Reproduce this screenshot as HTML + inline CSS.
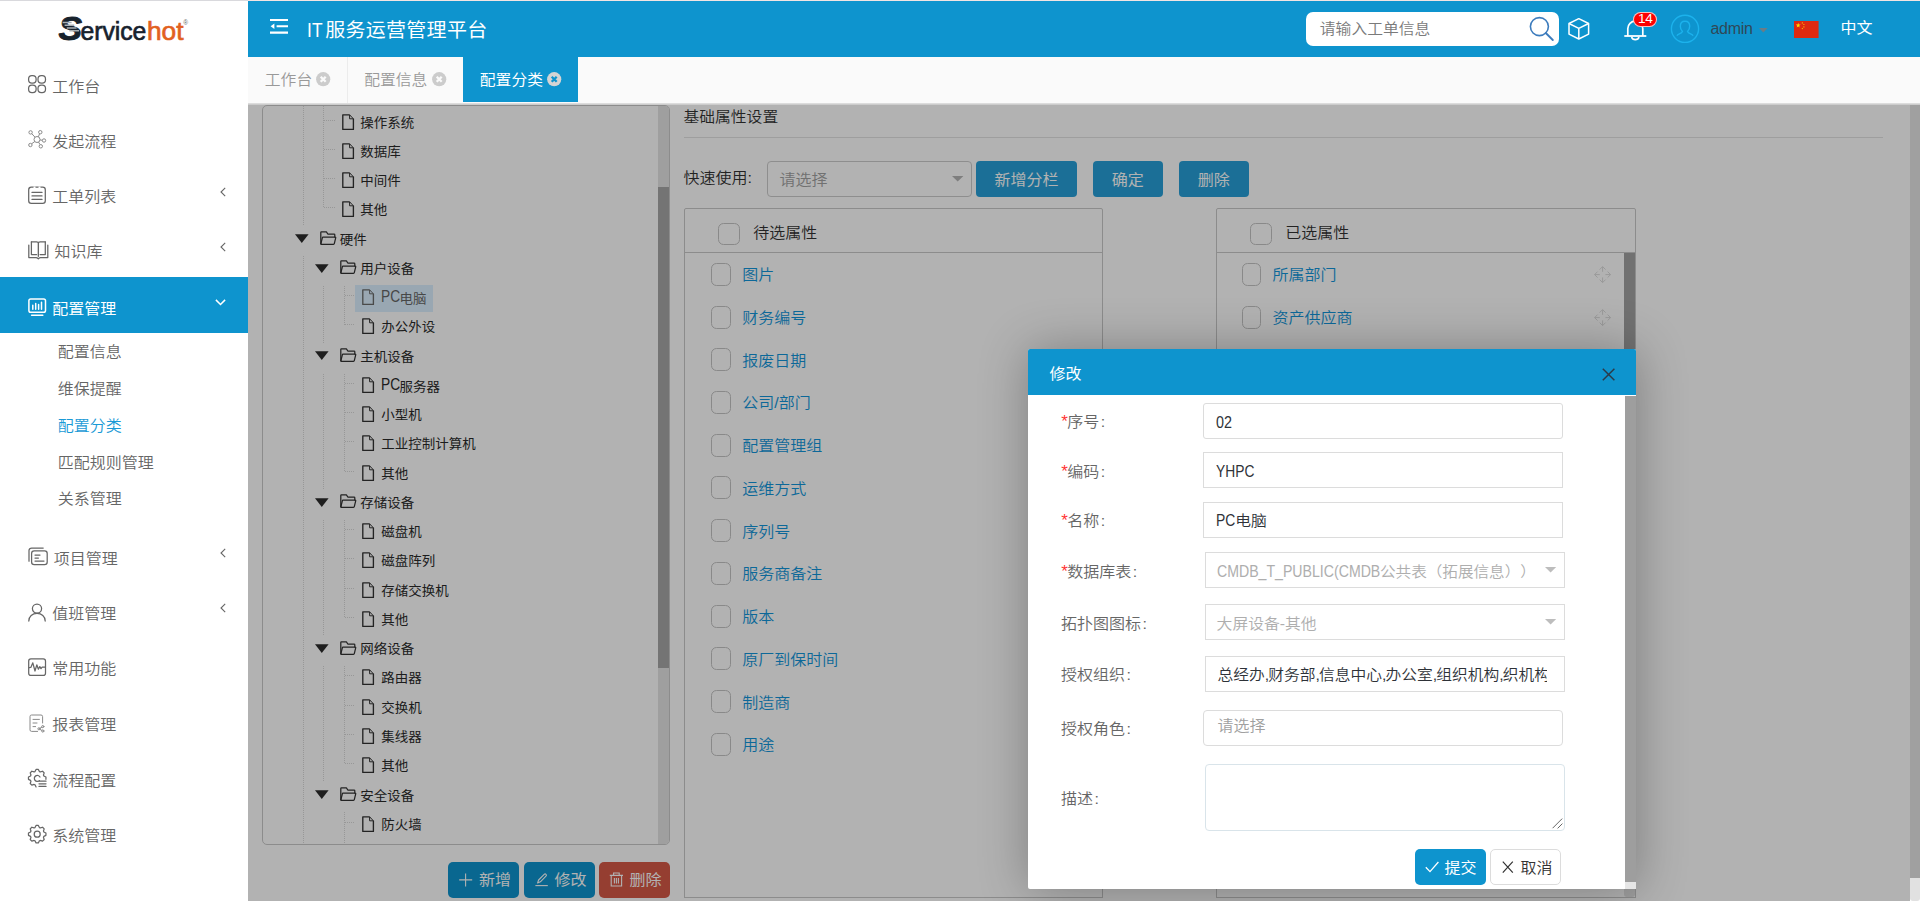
<!DOCTYPE html>
<html lang="zh-CN"><head><meta charset="utf-8"><title>IT服务运营管理平台</title>
<style>
*{box-sizing:border-box;margin:0;padding:0}
html,body{width:1920px;height:902px;overflow:hidden;background:#fff}
body{position:relative;font-family:"Liberation Sans","Noto Sans CJK SC",sans-serif;font-size:16px;color:#333;font-weight:350;text-spacing-trim:space-all;font-kerning:none}
.abs{position:absolute}
.t{position:absolute;white-space:nowrap;line-height:1}
svg{position:absolute;overflow:visible}
#topline{position:absolute;left:0;top:0;width:1920px;height:1px;background:linear-gradient(to right,#d9d9dd 0,#d9d9dd 248px,#f1e4e3 248px,#f1e4e3 100%);z-index:50}
#side{position:absolute;left:0;top:0;width:248px;height:902px;background:#fff}
#mask{position:absolute;left:248px;top:105px;width:1662px;height:796px;background:rgba(0,0,0,.3);z-index:10}
#pscroll{position:absolute;left:1910px;top:105px;width:10px;height:796px;background:#e1e1e1;border-radius:0 0 3px 3px}
#pscroll i{position:absolute;left:0;top:0;width:10px;height:772.6px;background:#a0a0a0}
</style></head><body>
<div id="topline"></div>
<div id="side">
<svg style="left:56px;top:10px" width="140" height="36" viewBox="56 10 140 36"><text font-family="Liberation Sans, sans-serif"><tspan x="58.6" y="39.7" font-weight="700" font-style="italic" font-size="33" fill="#17222d" stroke="#17222d" stroke-width="0.9" stroke-linejoin="round" textLength="23.5" lengthAdjust="spacingAndGlyphs">S</tspan><tspan x="80.4" y="39.5" font-size="26.6" fill="#17222d" stroke="#17222d" stroke-width="0.7" textLength="66" lengthAdjust="spacingAndGlyphs">ervice</tspan><tspan x="147" y="39.5" font-size="26.6" fill="#e2611f" stroke="#e2611f" stroke-width="0.7" textLength="36.5" lengthAdjust="spacingAndGlyphs">hot</tspan><tspan x="183.2" y="25" font-size="6.5" fill="#666">®</tspan></text><path d="M62.6 22.6h9M64.6 25.3h9.6M66.8 28h9.8M69.4 30.7h9.6" stroke="#a9aeb3" stroke-width="1.5"/></svg>
<svg style="left:28.00px;top:75.30px;" width="19" height="19" viewBox="0 0 19 19" fill="none"><rect x="0.6" y="0.6" width="7.5" height="7.5" rx="3.3" stroke="#666" stroke-width="1.25" fill="none" stroke-linecap="round" stroke-linejoin="round"/><rect x="0.6" y="10" width="7.5" height="7.5" rx="3.3" stroke="#666" stroke-width="1.25" fill="none" stroke-linecap="round" stroke-linejoin="round"/><rect x="10" y="0.6" width="7.5" height="7.5" rx="3.3" stroke="#666" stroke-width="1.25" fill="none" stroke-linecap="round" stroke-linejoin="round"/><rect x="10" y="10" width="7.5" height="7.5" rx="3.3" stroke="#666" stroke-width="1.25" fill="none" stroke-linecap="round" stroke-linejoin="round"/></svg>
<div class="t" style="left:52.30px;top:78.50px;font-size:16px;line-height:16px;transform:scaleY(0.94);transform-origin:0 43.75%;color:#666;">工作台</div>
<svg style="left:28.00px;top:130.40px;" width="19" height="19" viewBox="0 0 19 19" fill="none"><circle cx="9" cy="9.5" r="3" stroke="#8a8a8a" stroke-width="1" fill="none"/><circle cx="2.6" cy="2.4" r="1.7" stroke="#8a8a8a" stroke-width="1" fill="none"/><circle cx="12.3" cy="2.2" r="1.7" stroke="#8a8a8a" stroke-width="1" fill="none"/><circle cx="16" cy="10.5" r="1.7" stroke="#8a8a8a" stroke-width="1" fill="none"/><circle cx="12.8" cy="16.3" r="1.7" stroke="#8a8a8a" stroke-width="1" fill="none"/><circle cx="2.4" cy="15" r="1.7" stroke="#8a8a8a" stroke-width="1" fill="none"/><path d="M3.8 3.7L7 7.2M11.6 3.8L10.3 6.8M14.3 10.3L12 9.9M12.1 14.7L10.5 12.1M3.6 13.8L6.8 11.5" stroke="#8a8a8a" stroke-width="1" fill="none"/></svg>
<div class="t" style="left:52.30px;top:133.60px;font-size:16px;line-height:16px;transform:scaleY(0.94);transform-origin:0 43.75%;color:#666;">发起流程</div>
<svg style="left:28.00px;top:186.20px;" width="19" height="19" viewBox="0 0 19 19" fill="none"><rect x="0.7" y="1.2" width="16.6" height="16.2" rx="2.6" stroke="#666" stroke-width="1.25" fill="none" stroke-linecap="round" stroke-linejoin="round"/><path d="M4 6.4h10M4 9.9h10M4 13.4h10" stroke="#666" stroke-width="1.25" fill="none" stroke-linecap="round" stroke-linejoin="round"/><path d="M5.5 1.2h2M10.5 1.2h2" stroke="#fff" stroke-width="1.6"/></svg>
<div class="t" style="left:52.30px;top:189.40px;font-size:16px;line-height:16px;transform:scaleY(0.94);transform-origin:0 43.75%;color:#666;">工单列表</div>
<svg style="left:219.50px;top:186.80px;" width="6" height="10" viewBox="0 0 6 10" fill="none"><path d="M5.2 0.8L1 5l4.2 4.2" stroke="#666" stroke-width="1.1" fill="none"/></svg>
<svg style="left:28.00px;top:241.20px;" width="19" height="19" viewBox="0 0 19 19" fill="none"><path d="M3.4 0.9h5.2a1.8 1.8 0 0 1 1.8 1.8v12.6M17.3 0.9h-5.2a1.8 1.8 0 0 0-1.8 1.8v12.6" stroke="#666" stroke-width="1.25" fill="none" stroke-linecap="round" stroke-linejoin="round"/><path d="M3.4 0.9v12.6h5.2M17.3 0.9v12.6h-5.2" stroke="#666" stroke-width="1.25" fill="none" stroke-linecap="round" stroke-linejoin="round"/><path d="M0.8 4v12.6h7.2c1 0 1.6 0.5 2.3 1.2c0.7-0.7 1.3-1.2 2.3-1.2h7.2V4" stroke="#666" stroke-width="1.25" fill="none" stroke-linecap="round" stroke-linejoin="round"/></svg>
<div class="t" style="left:54.60px;top:244.40px;font-size:16px;line-height:16px;transform:scaleY(0.94);transform-origin:0 43.75%;color:#666;">知识库</div>
<svg style="left:219.50px;top:241.80px;" width="6" height="10" viewBox="0 0 6 10" fill="none"><path d="M5.2 0.8L1 5l4.2 4.2" stroke="#666" stroke-width="1.1" fill="none"/></svg>
<div class="abs" style="left:0.00px;top:277.00px;width:248.00px;height:56.00px;background:#0e94ce"></div>
<svg style="left:28.00px;top:298.30px;" width="19" height="19" viewBox="0 0 19 19" fill="none"><rect x="0.9" y="0.9" width="16.6" height="13.4" rx="1.8" stroke="#fff" stroke-width="1.5" fill="none" stroke-linecap="round" stroke-linejoin="round"/><path d="M4.8 11.2V7.2M7.7 11.2V5.4M10.6 11.2V6.6M13.5 11.2V4.2" stroke="#fff" stroke-width="1.5" fill="none" stroke-linecap="round" stroke-linejoin="round"/><path d="M3.6 17.3h11.2" stroke="#fff" stroke-width="1.5" fill="none" stroke-linecap="round" stroke-linejoin="round"/></svg>
<div class="t" style="left:52.30px;top:300.50px;font-size:16px;line-height:16px;transform:scaleY(0.94);transform-origin:0 43.75%;color:#fff;font-weight:400;">配置管理</div>
<svg style="left:214.70px;top:299.40px;" width="11" height="7" viewBox="0 0 11 7" fill="none"><path d="M0.9 0.9L5.5 5.5L10.1 0.9" stroke="#fff" stroke-width="1.5" fill="none"/></svg>
<svg style="left:28.00px;top:547.30px;" width="19" height="19" viewBox="0 0 19 19" fill="none"><path d="M1 14.2V3.6A2.6 2.6 0 0 1 3.6 1h11.6" stroke="#666" stroke-width="1.25" fill="none" stroke-linecap="round" stroke-linejoin="round"/><rect x="3.6" y="3.8" width="15.6" height="13.8" rx="2.6" stroke="#666" stroke-width="1.25" fill="none" stroke-linecap="round" stroke-linejoin="round"/><path d="M7 8h5M7 11h3.4M7 14h9" stroke="#666" stroke-width="1.25" fill="none" stroke-linecap="round" stroke-linejoin="round"/></svg>
<div class="t" style="left:53.70px;top:550.50px;font-size:16px;line-height:16px;transform:scaleY(0.94);transform-origin:0 43.75%;color:#666;">项目管理</div>
<svg style="left:219.50px;top:547.90px;" width="6" height="10" viewBox="0 0 6 10" fill="none"><path d="M5.2 0.8L1 5l4.2 4.2" stroke="#666" stroke-width="1.1" fill="none"/></svg>
<svg style="left:28.00px;top:602.80px;" width="19" height="19" viewBox="0 0 19 19" fill="none"><circle cx="9" cy="5.6" r="4.6" stroke="#666" stroke-width="1.25" fill="none" stroke-linecap="round" stroke-linejoin="round"/><path d="M0.8 18c0-4.6 3.6-7.6 8.2-7.6s8.2 3 8.2 7.6" stroke="#666" stroke-width="1.25" fill="none" stroke-linecap="round" stroke-linejoin="round"/></svg>
<div class="t" style="left:52.30px;top:606.00px;font-size:16px;line-height:16px;transform:scaleY(0.94);transform-origin:0 43.75%;color:#666;">值班管理</div>
<svg style="left:219.50px;top:603.40px;" width="6" height="10" viewBox="0 0 6 10" fill="none"><path d="M5.2 0.8L1 5l4.2 4.2" stroke="#666" stroke-width="1.1" fill="none"/></svg>
<svg style="left:28.00px;top:658.20px;" width="19" height="19" viewBox="0 0 19 19" fill="none"><rect x="0.7" y="0.8" width="16.8" height="16.6" rx="2.2" stroke="#666" stroke-width="1.25" fill="none" stroke-linecap="round" stroke-linejoin="round"/><path d="M1.2 9.6l1.6-0.2l2-4.6l2.2 8.2l1.8-6.2l1.6 4.4l1.4-2.6l1.2 2l1.2-1.4h2.6" stroke="#666" stroke-width="1.25" fill="none" stroke-linecap="round" stroke-linejoin="round"/></svg>
<div class="t" style="left:52.30px;top:661.40px;font-size:16px;line-height:16px;transform:scaleY(0.94);transform-origin:0 43.75%;color:#666;">常用功能</div>
<svg style="left:28.00px;top:713.80px;" width="19" height="19" viewBox="0 0 19 19" fill="none"><path d="M14.6 9V2.6a1.6 1.6 0 0 0-1.6-1.6H3.6a1.6 1.6 0 0 0-1.6 1.6v13.2a1.6 1.6 0 0 0 1.6 1.6h6" stroke="#8a8a8a" stroke-width="1" fill="none" stroke-linecap="round"/><path d="M5 5.4h6.4M5 9h4M5 12.6h2.6" stroke="#8a8a8a" stroke-width="1" fill="none" stroke-linecap="round"/><circle cx="14.8" cy="12.6" r="1.1" stroke="#8a8a8a" stroke-width="1" fill="none" stroke-linecap="round"/><circle cx="11" cy="14.8" r="1.1" stroke="#8a8a8a" stroke-width="1" fill="none" stroke-linecap="round"/><circle cx="14.8" cy="17" r="1.1" stroke="#8a8a8a" stroke-width="1" fill="none" stroke-linecap="round"/><path d="M12 14.2l1.8-1M12 15.4l1.8 1" stroke="#8a8a8a" stroke-width="1" fill="none" stroke-linecap="round"/></svg>
<div class="t" style="left:52.30px;top:717.00px;font-size:16px;line-height:16px;transform:scaleY(0.94);transform-origin:0 43.75%;color:#666;">报表管理</div>
<svg style="left:28.00px;top:769.40px;" width="19" height="19" viewBox="0 0 19 19" fill="none"><path d="M8.06 17.93L7.00 15.84L6.06 15.46L3.84 16.18L2.22 14.56L2.94 12.34L2.56 11.40L0.47 10.34L0.47 8.06L2.56 7.00L2.94 6.06L2.22 3.84L3.84 2.22L6.06 2.94L7.00 2.56L8.06 0.47L10.34 0.47L11.40 2.56L12.34 2.94L14.56 2.22L16.18 3.84L15.46 6.06L15.84 7.00L17.93 8.06L17.93 10.34" stroke="#666" stroke-width="1.25" fill="none" stroke-linecap="round" stroke-linejoin="round"/><path d="M11.4 11.6a3 3 0 1 1 0.6-3.6" stroke="#666" stroke-width="1.25" fill="none" stroke-linecap="round" stroke-linejoin="round"/><path d="M11 12.2h7M11 14.8h7M11 17.4h7" stroke="#666" stroke-width="1.25" fill="none" stroke-linecap="round" stroke-linejoin="round"/></svg>
<div class="t" style="left:52.30px;top:772.60px;font-size:16px;line-height:16px;transform:scaleY(0.94);transform-origin:0 43.75%;color:#666;">流程配置</div>
<svg style="left:28.00px;top:825.20px;" width="19" height="19" viewBox="0 0 19 19" fill="none"><path d="M7.00 2.56L8.06 0.47L10.34 0.47L11.40 2.56L12.34 2.94L14.56 2.22L16.18 3.84L15.46 6.06L15.84 7.00L17.93 8.06L17.93 10.34L15.84 11.40L15.46 12.34L16.18 14.56L14.56 16.18L12.34 15.46L11.40 15.84L10.34 17.93L8.06 17.93L7.00 15.84L6.06 15.46L3.84 16.18L2.22 14.56L2.94 12.34L2.56 11.40L0.47 10.34L0.47 8.06L2.56 7.00L2.94 6.06L2.22 3.84L3.84 2.22L6.06 2.94Z" stroke="#666" stroke-width="1.25" fill="none" stroke-linecap="round" stroke-linejoin="round"/><circle cx="9.2" cy="9.2" r="3" stroke="#666" stroke-width="1.25" fill="none" stroke-linecap="round" stroke-linejoin="round"/></svg>
<div class="t" style="left:52.30px;top:828.40px;font-size:16px;line-height:16px;transform:scaleY(0.94);transform-origin:0 43.75%;color:#666;">系统管理</div>
<div class="t" style="left:57.80px;top:343.70px;font-size:16px;line-height:16px;transform:scaleY(0.94);transform-origin:0 43.75%;color:#666;">配置信息</div>
<div class="t" style="left:57.80px;top:380.80px;font-size:16px;line-height:16px;transform:scaleY(0.94);transform-origin:0 43.75%;color:#666;">维保提醒</div>
<div class="t" style="left:57.80px;top:417.60px;font-size:16px;line-height:16px;transform:scaleY(0.94);transform-origin:0 43.75%;color:#1a9ad6;">配置分类</div>
<div class="t" style="left:57.80px;top:454.60px;font-size:16px;line-height:16px;transform:scaleY(0.94);transform-origin:0 43.75%;color:#666;">匹配规则管理</div>
<div class="t" style="left:57.80px;top:490.80px;font-size:16px;line-height:16px;transform:scaleY(0.94);transform-origin:0 43.75%;color:#666;">关系管理</div>
</div>
<div id="head" class="abs" style="left:248px;top:0;width:1672px;height:57px;background:#0e94ce"></div>
<svg style="left:270.00px;top:18.00px;" width="19" height="17" viewBox="0 0 19 17" fill="none"><path d="M0 2h18M6.6 8.3h11.4M0 14.6h18" stroke="#fff" stroke-width="2.1"/><path d="M4.4 5.6v5.4L0.6 8.3z" fill="#fff"/></svg>
<div class="t" style="left:306.75px;top:19.55px;font-size:20px;line-height:20px;transform:scaleY(0.94);transform-origin:0 43.75%;color:#fff;font-weight:400;letter-spacing:0.3px"><span style="display:inline-block;transform:scale(.87,1.09);transform-origin:0 60%">IT</span>服务运营管理平台</div>
<div class="abs" style="left:1306.20px;top:12.00px;width:252.60px;height:33.80px;background:#fff;border-radius:7px"></div>
<div class="t" style="left:1319.81px;top:20.79px;font-size:15.8px;line-height:15.8px;transform:scaleY(0.94);transform-origin:0 43.75%;color:#7a7a7a;">请输入工单信息</div>
<svg style="left:1527.00px;top:14.00px;" width="30" height="30" viewBox="0 0 30 30" fill="none"><circle cx="12.4" cy="12.6" r="9" stroke="#3d7cbd" stroke-width="1.6" fill="none"/><path d="M18.8 19l7 7" stroke="#3d7cbd" stroke-width="1.9" stroke-linecap="round"/></svg>
<svg style="left:1567.00px;top:17.00px;" width="24" height="24" viewBox="0 0 24 24" fill="none"><path d="M11.8 1.7l9.8 4.8v10.6l-9.8 4.9l-9.8-4.9V6.5z" stroke="#fff" stroke-width="1.5" stroke-linejoin="round" fill="none"/><path d="M2 6.5l9.8 4.9l9.8-4.9M11.8 11.4v10.6" stroke="#fff" stroke-width="1.5" stroke-linejoin="round" fill="none"/></svg>
<svg style="left:1624.00px;top:19.00px;" width="23" height="23" viewBox="0 0 23 23" fill="none"><path d="M1.2 17h20.2" stroke="#fff" stroke-width="1.8" stroke-linecap="square"/><path d="M3.8 17V9.6a7.5 7.5 0 0 1 15 0V17" stroke="#fff" stroke-width="1.7" fill="none"/><path d="M7.6 18a3.8 3.4 0 0 0 7.4 0" stroke="#fff" stroke-width="1.6" fill="none"/></svg>
<div class="abs" style="left:1633.40px;top:11.80px;width:23.60px;height:15.00px;background:#ff0000;border:1px solid rgba(255,255,255,.75);border-radius:8px"></div>
<div class="t" style="left:1633.4px;top:11.6px;width:23.6px;text-align:center;font-size:13.6px;line-height:14px;color:#fff;font-weight:400;letter-spacing:-0.4px">14</div>
<svg style="left:1670.00px;top:14.00px;" width="30" height="30" viewBox="0 0 30 30" fill="none"><circle cx="15" cy="14.8" r="13.6" stroke="#1cb2ec" stroke-width="1.4" fill="none"/><path d="M15 7.2c3 0 4.7 2.2 4.7 5c0 2.2-0.9 4-2.2 5.2c0.2 1.4 1.6 2 3.6 2.8c1 0.4 1.6 1 1.9 1.6M15 7.2c-3 0-4.7 2.2-4.7 5c0 2.2 0.9 4 2.2 5.2c-0.2 1.4-1.6 2-3.6 2.8c-1 0.4-1.6 1-1.9 1.6" stroke="#1cb2ec" stroke-width="1.4" fill="none"/></svg>
<div class="t" style="left:1710.40px;top:21.20px;font-size:16px;line-height:16px;color:#2f4858;letter-spacing:-0.25px">admin</div>
<svg style="left:1759.00px;top:28.00px;" width="9" height="5" viewBox="0 0 9 5" fill="none"><path d="M0 0h8.6L4.3 4.4z" fill="#6b7c86"/></svg>
<svg style="left:1793.70px;top:20.50px;" width="24.6" height="17" viewBox="0 0 24.6 17" fill="none"><rect width="24.6" height="17" fill="#de2910"/><polygon points="4.20,1.80 4.79,3.59 6.67,3.60 5.15,4.71 5.73,6.50 4.20,5.40 2.67,6.50 3.25,4.71 1.73,3.60 3.61,3.59" fill="#ffde00"/><circle cx="8.3" cy="1.9" r="0.55" fill="#ffde00"/><circle cx="9.9" cy="3.5" r="0.55" fill="#ffde00"/><circle cx="9.9" cy="5.9" r="0.55" fill="#ffde00"/><circle cx="8.3" cy="7.6" r="0.55" fill="#ffde00"/></svg>
<div class="t" style="left:1840.60px;top:20.30px;font-size:16px;line-height:16px;transform:scaleY(0.94);transform-origin:0 43.75%;color:#fff;font-weight:400;">中文</div>
<div id="tabs" class="abs" style="left:248px;top:57px;width:1672px;height:46px;background:#fafafa"></div>
<div class="abs" style="left:347.00px;top:57.00px;width:1.00px;height:46.00px;background:#ececec"></div>
<div class="t" style="left:264.81px;top:71.59px;font-size:15.8px;line-height:15.8px;transform:scaleY(0.94);transform-origin:0 43.75%;color:#999;">工作台</div>
<svg style="left:315.70px;top:72.00px;" width="14.4" height="14.4" viewBox="0 0 14.4 14.4" fill="none"><circle cx="7.2" cy="7.2" r="7.1" fill="#ccc"/><path d="M4.7 4.7l5 5M9.7 4.7l-5 5" stroke="#fafafa" stroke-width="2.3" stroke-linecap="butt"/></svg>
<div class="t" style="left:364.21px;top:71.79px;font-size:15.8px;line-height:15.8px;transform:scaleY(0.94);transform-origin:0 43.75%;color:#999;">配置信息</div>
<svg style="left:431.60px;top:72.00px;" width="14.4" height="14.4" viewBox="0 0 14.4 14.4" fill="none"><circle cx="7.2" cy="7.2" r="7.1" fill="#ccc"/><path d="M4.7 4.7l5 5M9.7 4.7l-5 5" stroke="#fafafa" stroke-width="2.3" stroke-linecap="butt"/></svg>
<div class="abs" style="left:463.00px;top:57.00px;width:115.00px;height:45.00px;background:#0e94ce"></div>
<div class="t" style="left:479.81px;top:71.59px;font-size:15.8px;line-height:15.8px;transform:scaleY(0.94);transform-origin:0 43.75%;color:#fff;font-weight:400;">配置分类</div>
<svg style="left:547.40px;top:72.00px;" width="14.4" height="14.4" viewBox="0 0 14.4 14.4" fill="none"><circle cx="7.2" cy="7.2" r="7.1" fill="#d4d4d4"/><path d="M4.7 4.7l5 5M9.7 4.7l-5 5" stroke="#0e94ce" stroke-width="2.3" stroke-linecap="butt"/></svg>
<div class="abs" style="left:248.00px;top:103.00px;width:1672.00px;height:2.00px;background:linear-gradient(#e4e4e4,#c4c4c4)"></div>
<div id="content" class="abs" style="left:248px;top:105px;width:1662px;height:796px;background:#fff;overflow:hidden"><div class="abs" style="left:-248px;top:-105px">
<div class="abs" style="left:262.00px;top:105.00px;width:408.00px;height:740.00px;border:1px solid #c9c9c9;border-radius:5px;background:#fff;overflow:hidden"><div class="abs" style="right:0;top:0;width:10.6px;height:100%;background:#e4e4e4"></div><div class="abs" style="right:0;top:81px;width:10.6px;height:481px;background:#a6a6a6"></div></div>
<div class="abs" style="left:303.00px;top:106.00px;width:1.00px;height:120.00px;background:repeating-linear-gradient(to bottom,#d9d9d9 0,#d9d9d9 1px,transparent 1px,transparent 2px)"></div>
<div class="abs" style="left:323.40px;top:106.00px;width:1.00px;height:102.00px;background:repeating-linear-gradient(to bottom,#d9d9d9 0,#d9d9d9 1px,transparent 1px,transparent 2px)"></div>
<div class="abs" style="left:324.00px;top:120.00px;width:10.50px;height:1.00px;background:repeating-linear-gradient(to right,#d9d9d9 0,#d9d9d9 1px,transparent 1px,transparent 2px)"></div>
<div class="abs" style="left:324.00px;top:149.00px;width:10.50px;height:1.00px;background:repeating-linear-gradient(to right,#d9d9d9 0,#d9d9d9 1px,transparent 1px,transparent 2px)"></div>
<div class="abs" style="left:324.00px;top:178.00px;width:10.50px;height:1.00px;background:repeating-linear-gradient(to right,#d9d9d9 0,#d9d9d9 1px,transparent 1px,transparent 2px)"></div>
<div class="abs" style="left:324.00px;top:207.00px;width:10.50px;height:1.00px;background:repeating-linear-gradient(to right,#d9d9d9 0,#d9d9d9 1px,transparent 1px,transparent 2px)"></div>
<div class="abs" style="left:303.00px;top:256.00px;width:1.00px;height:587.50px;background:repeating-linear-gradient(to bottom,#d9d9d9 0,#d9d9d9 1px,transparent 1px,transparent 2px)"></div>
<div class="abs" style="left:323.40px;top:285.75px;width:1.00px;height:57.00px;background:repeating-linear-gradient(to bottom,#d9d9d9 0,#d9d9d9 1px,transparent 1px,transparent 2px)"></div>
<div class="abs" style="left:344.00px;top:285.75px;width:1.00px;height:39.25px;background:repeating-linear-gradient(to bottom,#d9d9d9 0,#d9d9d9 1px,transparent 1px,transparent 2px)"></div>
<div class="abs" style="left:344.50px;top:295.00px;width:10.10px;height:1.00px;background:repeating-linear-gradient(to right,#d9d9d9 0,#d9d9d9 1px,transparent 1px,transparent 2px)"></div>
<div class="abs" style="left:344.50px;top:324.00px;width:10.10px;height:1.00px;background:repeating-linear-gradient(to right,#d9d9d9 0,#d9d9d9 1px,transparent 1px,transparent 2px)"></div>
<div class="abs" style="left:323.40px;top:373.50px;width:1.00px;height:115.50px;background:repeating-linear-gradient(to bottom,#d9d9d9 0,#d9d9d9 1px,transparent 1px,transparent 2px)"></div>
<div class="abs" style="left:344.00px;top:373.50px;width:1.00px;height:98.50px;background:repeating-linear-gradient(to bottom,#d9d9d9 0,#d9d9d9 1px,transparent 1px,transparent 2px)"></div>
<div class="abs" style="left:344.50px;top:383.00px;width:10.10px;height:1.00px;background:repeating-linear-gradient(to right,#d9d9d9 0,#d9d9d9 1px,transparent 1px,transparent 2px)"></div>
<div class="abs" style="left:344.50px;top:412.00px;width:10.10px;height:1.00px;background:repeating-linear-gradient(to right,#d9d9d9 0,#d9d9d9 1px,transparent 1px,transparent 2px)"></div>
<div class="abs" style="left:344.50px;top:441.00px;width:10.10px;height:1.00px;background:repeating-linear-gradient(to right,#d9d9d9 0,#d9d9d9 1px,transparent 1px,transparent 2px)"></div>
<div class="abs" style="left:344.50px;top:471.00px;width:10.10px;height:1.00px;background:repeating-linear-gradient(to right,#d9d9d9 0,#d9d9d9 1px,transparent 1px,transparent 2px)"></div>
<div class="abs" style="left:323.40px;top:519.75px;width:1.00px;height:115.50px;background:repeating-linear-gradient(to bottom,#d9d9d9 0,#d9d9d9 1px,transparent 1px,transparent 2px)"></div>
<div class="abs" style="left:344.00px;top:519.75px;width:1.00px;height:98.25px;background:repeating-linear-gradient(to bottom,#d9d9d9 0,#d9d9d9 1px,transparent 1px,transparent 2px)"></div>
<div class="abs" style="left:344.50px;top:529.00px;width:10.10px;height:1.00px;background:repeating-linear-gradient(to right,#d9d9d9 0,#d9d9d9 1px,transparent 1px,transparent 2px)"></div>
<div class="abs" style="left:344.50px;top:558.00px;width:10.10px;height:1.00px;background:repeating-linear-gradient(to right,#d9d9d9 0,#d9d9d9 1px,transparent 1px,transparent 2px)"></div>
<div class="abs" style="left:344.50px;top:588.00px;width:10.10px;height:1.00px;background:repeating-linear-gradient(to right,#d9d9d9 0,#d9d9d9 1px,transparent 1px,transparent 2px)"></div>
<div class="abs" style="left:344.50px;top:617.00px;width:10.10px;height:1.00px;background:repeating-linear-gradient(to right,#d9d9d9 0,#d9d9d9 1px,transparent 1px,transparent 2px)"></div>
<div class="abs" style="left:323.40px;top:666.00px;width:1.00px;height:115.50px;background:repeating-linear-gradient(to bottom,#d9d9d9 0,#d9d9d9 1px,transparent 1px,transparent 2px)"></div>
<div class="abs" style="left:344.00px;top:666.00px;width:1.00px;height:98.00px;background:repeating-linear-gradient(to bottom,#d9d9d9 0,#d9d9d9 1px,transparent 1px,transparent 2px)"></div>
<div class="abs" style="left:344.50px;top:675.00px;width:10.10px;height:1.00px;background:repeating-linear-gradient(to right,#d9d9d9 0,#d9d9d9 1px,transparent 1px,transparent 2px)"></div>
<div class="abs" style="left:344.50px;top:705.00px;width:10.10px;height:1.00px;background:repeating-linear-gradient(to right,#d9d9d9 0,#d9d9d9 1px,transparent 1px,transparent 2px)"></div>
<div class="abs" style="left:344.50px;top:734.00px;width:10.10px;height:1.00px;background:repeating-linear-gradient(to right,#d9d9d9 0,#d9d9d9 1px,transparent 1px,transparent 2px)"></div>
<div class="abs" style="left:344.50px;top:763.00px;width:10.10px;height:1.00px;background:repeating-linear-gradient(to right,#d9d9d9 0,#d9d9d9 1px,transparent 1px,transparent 2px)"></div>
<div class="abs" style="left:344.00px;top:812.25px;width:1.00px;height:31.25px;background:repeating-linear-gradient(to bottom,#d9d9d9 0,#d9d9d9 1px,transparent 1px,transparent 2px)"></div>
<div class="abs" style="left:344.50px;top:822.00px;width:10.10px;height:1.00px;background:repeating-linear-gradient(to right,#d9d9d9 0,#d9d9d9 1px,transparent 1px,transparent 2px)"></div>
<div class="abs" style="left:355.00px;top:285.00px;width:77.80px;height:26.70px;background:#dcf0ff"></div>
<svg style="left:341.80px;top:113.60px;" width="13" height="17" viewBox="0 0 13 17" fill="none"><path d="M7.6 0.8H0.8v14.6h10.6V4.8" stroke="#333" stroke-width="1.35" fill="none" stroke-linejoin="round"/><path d="M7.6 0.8l3.8 4h-3.8z" stroke="#333" stroke-width="1" fill="none" stroke-linejoin="round"/></svg>
<div class="t" style="left:360.16px;top:115.69px;font-size:13.5px;line-height:13.5px;transform:scaleY(0.94);transform-origin:0 43.75%;color:#2a2a2a;font-weight:400;">操作系统</div>
<svg style="left:341.80px;top:142.85px;" width="13" height="17" viewBox="0 0 13 17" fill="none"><path d="M7.6 0.8H0.8v14.6h10.6V4.8" stroke="#333" stroke-width="1.35" fill="none" stroke-linejoin="round"/><path d="M7.6 0.8l3.8 4h-3.8z" stroke="#333" stroke-width="1" fill="none" stroke-linejoin="round"/></svg>
<div class="t" style="left:360.16px;top:144.94px;font-size:13.5px;line-height:13.5px;transform:scaleY(0.94);transform-origin:0 43.75%;color:#2a2a2a;font-weight:400;">数据库</div>
<svg style="left:341.80px;top:172.10px;" width="13" height="17" viewBox="0 0 13 17" fill="none"><path d="M7.6 0.8H0.8v14.6h10.6V4.8" stroke="#333" stroke-width="1.35" fill="none" stroke-linejoin="round"/><path d="M7.6 0.8l3.8 4h-3.8z" stroke="#333" stroke-width="1" fill="none" stroke-linejoin="round"/></svg>
<div class="t" style="left:360.16px;top:174.19px;font-size:13.5px;line-height:13.5px;transform:scaleY(0.94);transform-origin:0 43.75%;color:#2a2a2a;font-weight:400;">中间件</div>
<svg style="left:341.80px;top:201.35px;" width="13" height="17" viewBox="0 0 13 17" fill="none"><path d="M7.6 0.8H0.8v14.6h10.6V4.8" stroke="#333" stroke-width="1.35" fill="none" stroke-linejoin="round"/><path d="M7.6 0.8l3.8 4h-3.8z" stroke="#333" stroke-width="1" fill="none" stroke-linejoin="round"/></svg>
<div class="t" style="left:360.16px;top:203.44px;font-size:13.5px;line-height:13.5px;transform:scaleY(0.94);transform-origin:0 43.75%;color:#2a2a2a;font-weight:400;">其他</div>
<svg style="left:295.00px;top:234.40px;" width="14" height="10" viewBox="0 0 14 10" fill="none"><path d="M0 0.2h13.6L6.8 9z" fill="#2b2b2b"/></svg>
<svg style="left:320.00px;top:231.00px;" width="17" height="14" viewBox="0 0 17 14" fill="none"><path d="M0.8 13V1.4a0.6 0.6 0 0 1 0.6-0.6h5l1.4 2.2h6.2a0.8 0.8 0 0 1 0.8 0.8v2.6" stroke="#333" stroke-width="1.25" fill="none" stroke-linejoin="round"/><path d="M0.8 13.2l1.6-6.6a0.6 0.6 0 0 1 0.6-0.4h12.2a0.5 0.5 0 0 1 0.5 0.7l-1.4 5.8a0.8 0.8 0 0 1-0.8 0.6H1z" stroke="#333" stroke-width="1.25" fill="none" stroke-linejoin="round"/></svg>
<div class="t" style="left:339.76px;top:232.89px;font-size:13.5px;line-height:13.5px;transform:scaleY(0.94);transform-origin:0 43.75%;color:#2a2a2a;font-weight:400;">硬件</div>
<svg style="left:315.40px;top:263.65px;" width="14" height="10" viewBox="0 0 14 10" fill="none"><path d="M0 0.2h13.6L6.8 9z" fill="#2b2b2b"/></svg>
<svg style="left:340.40px;top:260.25px;" width="17" height="14" viewBox="0 0 17 14" fill="none"><path d="M0.8 13V1.4a0.6 0.6 0 0 1 0.6-0.6h5l1.4 2.2h6.2a0.8 0.8 0 0 1 0.8 0.8v2.6" stroke="#333" stroke-width="1.25" fill="none" stroke-linejoin="round"/><path d="M0.8 13.2l1.6-6.6a0.6 0.6 0 0 1 0.6-0.4h12.2a0.5 0.5 0 0 1 0.5 0.7l-1.4 5.8a0.8 0.8 0 0 1-0.8 0.6H1z" stroke="#333" stroke-width="1.25" fill="none" stroke-linejoin="round"/></svg>
<div class="t" style="left:360.16px;top:262.14px;font-size:13.5px;line-height:13.5px;transform:scaleY(0.94);transform-origin:0 43.75%;color:#2a2a2a;font-weight:400;">用户设备</div>
<svg style="left:362.20px;top:289.10px;" width="13" height="17" viewBox="0 0 13 17" fill="none"><path d="M7.6 0.8H0.8v14.6h10.6V4.8" stroke="#6a6a6a" stroke-width="1.35" fill="none" stroke-linejoin="round"/><path d="M7.6 0.8l3.8 4h-3.8z" stroke="#6a6a6a" stroke-width="1" fill="none" stroke-linejoin="round"/></svg>
<div class="t" style="left:381.16px;top:291.19px;font-size:13.5px;line-height:13.5px;transform:scaleY(0.94);transform-origin:0 43.75%;color:#666;font-weight:400;"><span style="display:inline-block;font-size:16.4px;line-height:13.5px;transform:scale(.84,1.064);transform-origin:0 60%;margin-right:-4.4px;position:relative;top:-0.6px">PC</span>电脑</div>
<svg style="left:362.20px;top:318.35px;" width="13" height="17" viewBox="0 0 13 17" fill="none"><path d="M7.6 0.8H0.8v14.6h10.6V4.8" stroke="#333" stroke-width="1.35" fill="none" stroke-linejoin="round"/><path d="M7.6 0.8l3.8 4h-3.8z" stroke="#333" stroke-width="1" fill="none" stroke-linejoin="round"/></svg>
<div class="t" style="left:381.16px;top:320.44px;font-size:13.5px;line-height:13.5px;transform:scaleY(0.94);transform-origin:0 43.75%;color:#2a2a2a;font-weight:400;">办公外设</div>
<svg style="left:315.40px;top:351.40px;" width="14" height="10" viewBox="0 0 14 10" fill="none"><path d="M0 0.2h13.6L6.8 9z" fill="#2b2b2b"/></svg>
<svg style="left:340.40px;top:348.00px;" width="17" height="14" viewBox="0 0 17 14" fill="none"><path d="M0.8 13V1.4a0.6 0.6 0 0 1 0.6-0.6h5l1.4 2.2h6.2a0.8 0.8 0 0 1 0.8 0.8v2.6" stroke="#333" stroke-width="1.25" fill="none" stroke-linejoin="round"/><path d="M0.8 13.2l1.6-6.6a0.6 0.6 0 0 1 0.6-0.4h12.2a0.5 0.5 0 0 1 0.5 0.7l-1.4 5.8a0.8 0.8 0 0 1-0.8 0.6H1z" stroke="#333" stroke-width="1.25" fill="none" stroke-linejoin="round"/></svg>
<div class="t" style="left:360.16px;top:349.89px;font-size:13.5px;line-height:13.5px;transform:scaleY(0.94);transform-origin:0 43.75%;color:#2a2a2a;font-weight:400;">主机设备</div>
<svg style="left:362.20px;top:376.85px;" width="13" height="17" viewBox="0 0 13 17" fill="none"><path d="M7.6 0.8H0.8v14.6h10.6V4.8" stroke="#333" stroke-width="1.35" fill="none" stroke-linejoin="round"/><path d="M7.6 0.8l3.8 4h-3.8z" stroke="#333" stroke-width="1" fill="none" stroke-linejoin="round"/></svg>
<div class="t" style="left:381.16px;top:378.94px;font-size:13.5px;line-height:13.5px;transform:scaleY(0.94);transform-origin:0 43.75%;color:#2a2a2a;font-weight:400;"><span style="display:inline-block;font-size:16.4px;line-height:13.5px;transform:scale(.84,1.064);transform-origin:0 60%;margin-right:-4.4px;position:relative;top:-0.6px">PC</span>服务器</div>
<svg style="left:362.20px;top:406.10px;" width="13" height="17" viewBox="0 0 13 17" fill="none"><path d="M7.6 0.8H0.8v14.6h10.6V4.8" stroke="#333" stroke-width="1.35" fill="none" stroke-linejoin="round"/><path d="M7.6 0.8l3.8 4h-3.8z" stroke="#333" stroke-width="1" fill="none" stroke-linejoin="round"/></svg>
<div class="t" style="left:381.16px;top:408.19px;font-size:13.5px;line-height:13.5px;transform:scaleY(0.94);transform-origin:0 43.75%;color:#2a2a2a;font-weight:400;">小型机</div>
<svg style="left:362.20px;top:435.35px;" width="13" height="17" viewBox="0 0 13 17" fill="none"><path d="M7.6 0.8H0.8v14.6h10.6V4.8" stroke="#333" stroke-width="1.35" fill="none" stroke-linejoin="round"/><path d="M7.6 0.8l3.8 4h-3.8z" stroke="#333" stroke-width="1" fill="none" stroke-linejoin="round"/></svg>
<div class="t" style="left:381.16px;top:437.44px;font-size:13.5px;line-height:13.5px;transform:scaleY(0.94);transform-origin:0 43.75%;color:#2a2a2a;font-weight:400;">工业控制计算机</div>
<svg style="left:362.20px;top:464.60px;" width="13" height="17" viewBox="0 0 13 17" fill="none"><path d="M7.6 0.8H0.8v14.6h10.6V4.8" stroke="#333" stroke-width="1.35" fill="none" stroke-linejoin="round"/><path d="M7.6 0.8l3.8 4h-3.8z" stroke="#333" stroke-width="1" fill="none" stroke-linejoin="round"/></svg>
<div class="t" style="left:381.16px;top:466.69px;font-size:13.5px;line-height:13.5px;transform:scaleY(0.94);transform-origin:0 43.75%;color:#2a2a2a;font-weight:400;">其他</div>
<svg style="left:315.40px;top:497.65px;" width="14" height="10" viewBox="0 0 14 10" fill="none"><path d="M0 0.2h13.6L6.8 9z" fill="#2b2b2b"/></svg>
<svg style="left:340.40px;top:494.25px;" width="17" height="14" viewBox="0 0 17 14" fill="none"><path d="M0.8 13V1.4a0.6 0.6 0 0 1 0.6-0.6h5l1.4 2.2h6.2a0.8 0.8 0 0 1 0.8 0.8v2.6" stroke="#333" stroke-width="1.25" fill="none" stroke-linejoin="round"/><path d="M0.8 13.2l1.6-6.6a0.6 0.6 0 0 1 0.6-0.4h12.2a0.5 0.5 0 0 1 0.5 0.7l-1.4 5.8a0.8 0.8 0 0 1-0.8 0.6H1z" stroke="#333" stroke-width="1.25" fill="none" stroke-linejoin="round"/></svg>
<div class="t" style="left:360.16px;top:496.14px;font-size:13.5px;line-height:13.5px;transform:scaleY(0.94);transform-origin:0 43.75%;color:#2a2a2a;font-weight:400;">存储设备</div>
<svg style="left:362.20px;top:523.10px;" width="13" height="17" viewBox="0 0 13 17" fill="none"><path d="M7.6 0.8H0.8v14.6h10.6V4.8" stroke="#333" stroke-width="1.35" fill="none" stroke-linejoin="round"/><path d="M7.6 0.8l3.8 4h-3.8z" stroke="#333" stroke-width="1" fill="none" stroke-linejoin="round"/></svg>
<div class="t" style="left:381.16px;top:525.19px;font-size:13.5px;line-height:13.5px;transform:scaleY(0.94);transform-origin:0 43.75%;color:#2a2a2a;font-weight:400;">磁盘机</div>
<svg style="left:362.20px;top:552.35px;" width="13" height="17" viewBox="0 0 13 17" fill="none"><path d="M7.6 0.8H0.8v14.6h10.6V4.8" stroke="#333" stroke-width="1.35" fill="none" stroke-linejoin="round"/><path d="M7.6 0.8l3.8 4h-3.8z" stroke="#333" stroke-width="1" fill="none" stroke-linejoin="round"/></svg>
<div class="t" style="left:381.16px;top:554.44px;font-size:13.5px;line-height:13.5px;transform:scaleY(0.94);transform-origin:0 43.75%;color:#2a2a2a;font-weight:400;">磁盘阵列</div>
<svg style="left:362.20px;top:581.60px;" width="13" height="17" viewBox="0 0 13 17" fill="none"><path d="M7.6 0.8H0.8v14.6h10.6V4.8" stroke="#333" stroke-width="1.35" fill="none" stroke-linejoin="round"/><path d="M7.6 0.8l3.8 4h-3.8z" stroke="#333" stroke-width="1" fill="none" stroke-linejoin="round"/></svg>
<div class="t" style="left:381.16px;top:583.69px;font-size:13.5px;line-height:13.5px;transform:scaleY(0.94);transform-origin:0 43.75%;color:#2a2a2a;font-weight:400;">存储交换机</div>
<svg style="left:362.20px;top:610.85px;" width="13" height="17" viewBox="0 0 13 17" fill="none"><path d="M7.6 0.8H0.8v14.6h10.6V4.8" stroke="#333" stroke-width="1.35" fill="none" stroke-linejoin="round"/><path d="M7.6 0.8l3.8 4h-3.8z" stroke="#333" stroke-width="1" fill="none" stroke-linejoin="round"/></svg>
<div class="t" style="left:381.16px;top:612.94px;font-size:13.5px;line-height:13.5px;transform:scaleY(0.94);transform-origin:0 43.75%;color:#2a2a2a;font-weight:400;">其他</div>
<svg style="left:315.40px;top:643.90px;" width="14" height="10" viewBox="0 0 14 10" fill="none"><path d="M0 0.2h13.6L6.8 9z" fill="#2b2b2b"/></svg>
<svg style="left:340.40px;top:640.50px;" width="17" height="14" viewBox="0 0 17 14" fill="none"><path d="M0.8 13V1.4a0.6 0.6 0 0 1 0.6-0.6h5l1.4 2.2h6.2a0.8 0.8 0 0 1 0.8 0.8v2.6" stroke="#333" stroke-width="1.25" fill="none" stroke-linejoin="round"/><path d="M0.8 13.2l1.6-6.6a0.6 0.6 0 0 1 0.6-0.4h12.2a0.5 0.5 0 0 1 0.5 0.7l-1.4 5.8a0.8 0.8 0 0 1-0.8 0.6H1z" stroke="#333" stroke-width="1.25" fill="none" stroke-linejoin="round"/></svg>
<div class="t" style="left:360.16px;top:642.39px;font-size:13.5px;line-height:13.5px;transform:scaleY(0.94);transform-origin:0 43.75%;color:#2a2a2a;font-weight:400;">网络设备</div>
<svg style="left:362.20px;top:669.35px;" width="13" height="17" viewBox="0 0 13 17" fill="none"><path d="M7.6 0.8H0.8v14.6h10.6V4.8" stroke="#333" stroke-width="1.35" fill="none" stroke-linejoin="round"/><path d="M7.6 0.8l3.8 4h-3.8z" stroke="#333" stroke-width="1" fill="none" stroke-linejoin="round"/></svg>
<div class="t" style="left:381.16px;top:671.44px;font-size:13.5px;line-height:13.5px;transform:scaleY(0.94);transform-origin:0 43.75%;color:#2a2a2a;font-weight:400;">路由器</div>
<svg style="left:362.20px;top:698.60px;" width="13" height="17" viewBox="0 0 13 17" fill="none"><path d="M7.6 0.8H0.8v14.6h10.6V4.8" stroke="#333" stroke-width="1.35" fill="none" stroke-linejoin="round"/><path d="M7.6 0.8l3.8 4h-3.8z" stroke="#333" stroke-width="1" fill="none" stroke-linejoin="round"/></svg>
<div class="t" style="left:381.16px;top:700.69px;font-size:13.5px;line-height:13.5px;transform:scaleY(0.94);transform-origin:0 43.75%;color:#2a2a2a;font-weight:400;">交换机</div>
<svg style="left:362.20px;top:727.85px;" width="13" height="17" viewBox="0 0 13 17" fill="none"><path d="M7.6 0.8H0.8v14.6h10.6V4.8" stroke="#333" stroke-width="1.35" fill="none" stroke-linejoin="round"/><path d="M7.6 0.8l3.8 4h-3.8z" stroke="#333" stroke-width="1" fill="none" stroke-linejoin="round"/></svg>
<div class="t" style="left:381.16px;top:729.94px;font-size:13.5px;line-height:13.5px;transform:scaleY(0.94);transform-origin:0 43.75%;color:#2a2a2a;font-weight:400;">集线器</div>
<svg style="left:362.20px;top:757.10px;" width="13" height="17" viewBox="0 0 13 17" fill="none"><path d="M7.6 0.8H0.8v14.6h10.6V4.8" stroke="#333" stroke-width="1.35" fill="none" stroke-linejoin="round"/><path d="M7.6 0.8l3.8 4h-3.8z" stroke="#333" stroke-width="1" fill="none" stroke-linejoin="round"/></svg>
<div class="t" style="left:381.16px;top:759.19px;font-size:13.5px;line-height:13.5px;transform:scaleY(0.94);transform-origin:0 43.75%;color:#2a2a2a;font-weight:400;">其他</div>
<svg style="left:315.40px;top:790.15px;" width="14" height="10" viewBox="0 0 14 10" fill="none"><path d="M0 0.2h13.6L6.8 9z" fill="#2b2b2b"/></svg>
<svg style="left:340.40px;top:786.75px;" width="17" height="14" viewBox="0 0 17 14" fill="none"><path d="M0.8 13V1.4a0.6 0.6 0 0 1 0.6-0.6h5l1.4 2.2h6.2a0.8 0.8 0 0 1 0.8 0.8v2.6" stroke="#333" stroke-width="1.25" fill="none" stroke-linejoin="round"/><path d="M0.8 13.2l1.6-6.6a0.6 0.6 0 0 1 0.6-0.4h12.2a0.5 0.5 0 0 1 0.5 0.7l-1.4 5.8a0.8 0.8 0 0 1-0.8 0.6H1z" stroke="#333" stroke-width="1.25" fill="none" stroke-linejoin="round"/></svg>
<div class="t" style="left:360.16px;top:788.64px;font-size:13.5px;line-height:13.5px;transform:scaleY(0.94);transform-origin:0 43.75%;color:#2a2a2a;font-weight:400;">安全设备</div>
<svg style="left:362.20px;top:815.60px;" width="13" height="17" viewBox="0 0 13 17" fill="none"><path d="M7.6 0.8H0.8v14.6h10.6V4.8" stroke="#333" stroke-width="1.35" fill="none" stroke-linejoin="round"/><path d="M7.6 0.8l3.8 4h-3.8z" stroke="#333" stroke-width="1" fill="none" stroke-linejoin="round"/></svg>
<div class="t" style="left:381.16px;top:817.69px;font-size:13.5px;line-height:13.5px;transform:scaleY(0.94);transform-origin:0 43.75%;color:#2a2a2a;font-weight:400;">防火墙</div>
<div class="abs" style="left:448.00px;top:862.00px;width:70.80px;height:35.80px;background:#0e94ce;border-radius:5px"></div><svg style="left:458.80px;top:873.20px;" width="14" height="14" viewBox="0 0 14 14" fill="none"><path d="M6.6 0.4v13M0.2 6.9h13" stroke="#fff" stroke-width="1.1"/></svg><div class="t" style="left:479.00px;top:872.20px;font-size:16px;line-height:16px;transform:scaleY(0.94);transform-origin:0 43.75%;color:#fff;font-weight:400;">新增</div>
<div class="abs" style="left:524.20px;top:862.00px;width:70.50px;height:35.80px;background:#0e94ce;border-radius:5px"></div><svg style="left:534.50px;top:873.00px;" width="14" height="14" viewBox="0 0 14 14" fill="none"><path d="M0.4 12.6h12.4" stroke="#fff" stroke-width="1.1"/><path d="M2.6 10l1-3l5.6-5.6a1.2 1.2 0 0 1 1.8 1.8L5.4 8.8z" stroke="#fff" stroke-width="1.1" fill="none" stroke-linejoin="round"/></svg><div class="t" style="left:554.60px;top:872.20px;font-size:16px;line-height:16px;transform:scaleY(0.94);transform-origin:0 43.75%;color:#fff;font-weight:400;">修改</div>
<div class="abs" style="left:599.20px;top:862.00px;width:70.80px;height:35.80px;background:#d65947;border-radius:5px"></div><svg style="left:608.50px;top:872.20px;" width="15" height="15" viewBox="0 0 15 15" fill="none"><path d="M0.8 3.4h13.2M4.6 3.2V1h5.6v2.2M2.2 3.6v10.4h10.4V3.6M5.4 6v5.6M7.4 6v5.6M9.4 6v5.6" stroke="#fff" stroke-width="1.1" fill="none"/></svg><div class="t" style="left:629.60px;top:872.20px;font-size:16px;line-height:16px;transform:scaleY(0.94);transform-origin:0 43.75%;color:#fff;font-weight:400;">删除</div>
<div class="t" style="left:683.41px;top:108.99px;font-size:15.8px;line-height:15.8px;transform:scaleY(0.94);transform-origin:0 43.75%;color:#333;">基础属性设置</div>
<div class="abs" style="left:684.00px;top:137.00px;width:1199.00px;height:1.00px;background:#e2e2e2"></div>
<div class="t" style="left:683.40px;top:170.30px;font-size:16px;line-height:16px;transform:scaleY(0.94);transform-origin:0 43.75%;color:#333;">快速使用:</div>
<div class="abs" style="left:767.00px;top:161.00px;width:205.00px;height:36.00px;border:1px solid #ccc;border-radius:4px;background:#fff"></div>
<div class="t" style="left:779.60px;top:171.90px;font-size:16px;line-height:16px;transform:scaleY(0.94);transform-origin:0 43.75%;color:#a2a2a2;">请选择</div>
<svg style="left:952.40px;top:175.80px;" width="12" height="6" viewBox="0 0 12 6" fill="none"><path d="M0 0h11.4L5.7 5.6z" fill="#b5b5b5"/></svg>
<div class="abs" style="left:976.20px;top:161.00px;width:100.80px;height:36.00px;background:#28a0d8;border-radius:4px"></div>
<div class="t" style="left:994.40px;top:171.50px;font-size:16px;line-height:16px;transform:scaleY(0.94);transform-origin:0 43.75%;color:#fff;font-weight:400;">新增分栏</div>
<div class="abs" style="left:1093.00px;top:161.00px;width:70.00px;height:36.00px;background:#28a0d8;border-radius:4px"></div>
<div class="t" style="left:1111.80px;top:171.50px;font-size:16px;line-height:16px;transform:scaleY(0.94);transform-origin:0 43.75%;color:#fff;font-weight:400;">确定</div>
<div class="abs" style="left:1179.00px;top:161.00px;width:70.00px;height:36.00px;background:#28a0d8;border-radius:4px"></div>
<div class="t" style="left:1197.80px;top:171.50px;font-size:16px;line-height:16px;transform:scaleY(0.94);transform-origin:0 43.75%;color:#fff;font-weight:400;">删除</div>
<div class="abs" style="left:684.00px;top:208.00px;width:419.00px;height:45.00px;border:1px solid #c9c9c9;border-radius:2px 2px 0 0;background:#fff"></div>
<div class="abs" style="left:684.00px;top:252.00px;width:419.00px;height:646.00px;border:1px solid #c9c9c9;background:#fff"></div>
<div class="abs" style="left:718.00px;top:223.00px;width:22.00px;height:22.00px;border:1px solid #c4c4c4;border-radius:5.5px;background:#fff"></div>
<div class="t" style="left:753.20px;top:224.90px;font-size:16px;line-height:16px;transform:scaleY(0.94);transform-origin:0 43.75%;color:#333;">待选属性</div>
<div class="abs" style="left:711.00px;top:263.00px;width:20.00px;height:23.00px;border:1px solid #c4c4c4;border-radius:5.5px;background:#fff"></div>
<div class="t" style="left:742.30px;top:267.30px;font-size:16px;line-height:16px;transform:scaleY(0.94);transform-origin:0 43.75%;color:#1296db;">图片</div>
<div class="abs" style="left:711.00px;top:306.00px;width:20.00px;height:23.00px;border:1px solid #c4c4c4;border-radius:5.5px;background:#fff"></div>
<div class="t" style="left:742.30px;top:310.03px;font-size:16px;line-height:16px;transform:scaleY(0.94);transform-origin:0 43.75%;color:#1296db;">财务编号</div>
<div class="abs" style="left:711.00px;top:348.00px;width:20.00px;height:23.00px;border:1px solid #c4c4c4;border-radius:5.5px;background:#fff"></div>
<div class="t" style="left:742.30px;top:352.76px;font-size:16px;line-height:16px;transform:scaleY(0.94);transform-origin:0 43.75%;color:#1296db;">报废日期</div>
<div class="abs" style="left:711.00px;top:391.00px;width:20.00px;height:23.00px;border:1px solid #c4c4c4;border-radius:5.5px;background:#fff"></div>
<div class="t" style="left:742.30px;top:395.49px;font-size:16px;line-height:16px;transform:scaleY(0.94);transform-origin:0 43.75%;color:#1296db;">公司/部门</div>
<div class="abs" style="left:711.00px;top:434.00px;width:20.00px;height:23.00px;border:1px solid #c4c4c4;border-radius:5.5px;background:#fff"></div>
<div class="t" style="left:742.30px;top:438.22px;font-size:16px;line-height:16px;transform:scaleY(0.94);transform-origin:0 43.75%;color:#1296db;">配置管理组</div>
<div class="abs" style="left:711.00px;top:476.00px;width:20.00px;height:23.00px;border:1px solid #c4c4c4;border-radius:5.5px;background:#fff"></div>
<div class="t" style="left:742.30px;top:480.95px;font-size:16px;line-height:16px;transform:scaleY(0.94);transform-origin:0 43.75%;color:#1296db;">运维方式</div>
<div class="abs" style="left:711.00px;top:519.00px;width:20.00px;height:23.00px;border:1px solid #c4c4c4;border-radius:5.5px;background:#fff"></div>
<div class="t" style="left:742.30px;top:523.68px;font-size:16px;line-height:16px;transform:scaleY(0.94);transform-origin:0 43.75%;color:#1296db;">序列号</div>
<div class="abs" style="left:711.00px;top:562.00px;width:20.00px;height:23.00px;border:1px solid #c4c4c4;border-radius:5.5px;background:#fff"></div>
<div class="t" style="left:742.30px;top:566.41px;font-size:16px;line-height:16px;transform:scaleY(0.94);transform-origin:0 43.75%;color:#1296db;">服务商备注</div>
<div class="abs" style="left:711.00px;top:605.00px;width:20.00px;height:23.00px;border:1px solid #c4c4c4;border-radius:5.5px;background:#fff"></div>
<div class="t" style="left:742.30px;top:609.14px;font-size:16px;line-height:16px;transform:scaleY(0.94);transform-origin:0 43.75%;color:#1296db;">版本</div>
<div class="abs" style="left:711.00px;top:647.00px;width:20.00px;height:23.00px;border:1px solid #c4c4c4;border-radius:5.5px;background:#fff"></div>
<div class="t" style="left:742.30px;top:651.87px;font-size:16px;line-height:16px;transform:scaleY(0.94);transform-origin:0 43.75%;color:#1296db;">原厂到保时间</div>
<div class="abs" style="left:711.00px;top:690.00px;width:20.00px;height:23.00px;border:1px solid #c4c4c4;border-radius:5.5px;background:#fff"></div>
<div class="t" style="left:742.30px;top:694.60px;font-size:16px;line-height:16px;transform:scaleY(0.94);transform-origin:0 43.75%;color:#1296db;">制造商</div>
<div class="abs" style="left:711.00px;top:733.00px;width:20.00px;height:23.00px;border:1px solid #c4c4c4;border-radius:5.5px;background:#fff"></div>
<div class="t" style="left:742.30px;top:737.33px;font-size:16px;line-height:16px;transform:scaleY(0.94);transform-origin:0 43.75%;color:#1296db;">用途</div>
<div class="abs" style="left:1216.00px;top:208.00px;width:420.00px;height:45.00px;border:1px solid #c9c9c9;border-radius:2px 2px 0 0;background:#fff"></div>
<div class="abs" style="left:1216.00px;top:252.00px;width:420.00px;height:646.00px;border:1px solid #c9c9c9;background:#fff"></div>
<div class="abs" style="left:1250.00px;top:223.00px;width:22.00px;height:22.00px;border:1px solid #c4c4c4;border-radius:5.5px;background:#fff"></div>
<div class="t" style="left:1285.20px;top:224.90px;font-size:16px;line-height:16px;transform:scaleY(0.94);transform-origin:0 43.75%;color:#333;">已选属性</div>
<div class="abs" style="left:1242.00px;top:263.00px;width:19.00px;height:23.00px;border:1px solid #c4c4c4;border-radius:5.5px;background:#fff"></div>
<div class="t" style="left:1272.40px;top:267.30px;font-size:16px;line-height:16px;transform:scaleY(0.94);transform-origin:0 43.75%;color:#1296db;">所属部门</div>
<svg style="left:1593.70px;top:266.00px;" width="17.2" height="17.2" viewBox="0 0 17.2 17.2" fill="none"><path d="M8.6 0.6v16M0.6 8.6h16" stroke="#dcdcdc" stroke-width="1" fill="none" stroke-dasharray="5.2 5.6"/><path d="M5.6 3.6L8.6 0.6L11.6 3.6M5.6 13.6l3 3l3-3M3.6 5.6L0.6 8.6L3.6 11.6M13.6 5.6l3 3l-3 3" stroke="#dcdcdc" stroke-width="1" fill="none"/></svg>
<div class="abs" style="left:1242.00px;top:306.00px;width:19.00px;height:23.00px;border:1px solid #c4c4c4;border-radius:5.5px;background:#fff"></div>
<div class="t" style="left:1272.40px;top:310.03px;font-size:16px;line-height:16px;transform:scaleY(0.94);transform-origin:0 43.75%;color:#1296db;">资产供应商</div>
<svg style="left:1593.70px;top:308.73px;" width="17.2" height="17.2" viewBox="0 0 17.2 17.2" fill="none"><path d="M8.6 0.6v16M0.6 8.6h16" stroke="#dcdcdc" stroke-width="1" fill="none" stroke-dasharray="5.2 5.6"/><path d="M5.6 3.6L8.6 0.6L11.6 3.6M5.6 13.6l3 3l3-3M3.6 5.6L0.6 8.6L3.6 11.6M13.6 5.6l3 3l-3 3" stroke="#dcdcdc" stroke-width="1" fill="none"/></svg>
<div class="abs" style="left:1624.00px;top:252.80px;width:11.00px;height:644.20px;background:#e4e4e4;border-radius:0 0 3px 3px"></div>
<div class="abs" style="left:1624.00px;top:252.80px;width:11.00px;height:347.20px;background:#a2a2a2"></div>
</div></div>
<div id="mask"></div>
<div id="pscroll"><i></i></div>
<div id="layer" class="abs" style="left:248px;top:105px;width:1662px;height:796px;overflow:hidden;z-index:20"><div class="abs" style="left:-248px;top:-105px">
<div id="modal" class="abs" style="left:1028px;top:349px;width:608px;height:540px;background:#fff;border-radius:2px;box-shadow:1px 1px 50px rgba(0,0,0,.3)"></div>
<div class="abs" style="left:0;top:0">
<div class="abs" style="left:1028.00px;top:349.00px;width:608.00px;height:46.00px;background:#0e94ce;border-radius:2px 2px 0 0"></div>
<div class="t" style="left:1049.60px;top:365.70px;font-size:16px;line-height:16px;transform:scaleY(0.94);transform-origin:0 43.75%;color:#fff;font-weight:400;">修改</div>
<svg style="left:1602.00px;top:367.60px;" width="14" height="13" viewBox="0 0 14 13" fill="none"><path d="M0.8 0.8l11.6 11.4M12.4 0.8L0.8 12.2" stroke="#2c3a48" stroke-width="1.5" fill="none"/></svg>
<div class="abs" style="left:1625.40px;top:395.00px;width:10.60px;height:494.00px;background:#fff"></div>
<div class="abs" style="left:1625.40px;top:396.20px;width:10.60px;height:485.80px;background:#9e9e9e"></div>
<div class="abs" style="left:1625.40px;top:882.00px;width:10.60px;height:6.60px;background:#e6e6e6"></div>
<div class="t" style="left:1061.30px;top:414.40px;font-size:17px;line-height:16px;color:#ff3535">*</div><div class="t" style="left:1067.30px;top:414.10px;font-size:16px;line-height:16px;transform:scaleY(0.94);transform-origin:0 43.75%;color:#666;">序号<span style="margin-left:1.5px">:</span></div>
<div class="abs" style="left:1203.00px;top:403.00px;width:360.00px;height:36.00px;border:1px solid #dcdcdc;border-radius:3px;background:#fff"></div>
<div class="t" style="left:1215.62px;top:414.98px;font-size:15.6px;line-height:15.6px;color:#2e3238;"><span style="display:inline-block;transform:scaleX(.92);transform-origin:0 50%;margin-right:0px">02</span></div>
<div class="t" style="left:1061.30px;top:463.80px;font-size:17px;line-height:16px;color:#ff3535">*</div><div class="t" style="left:1067.30px;top:463.50px;font-size:16px;line-height:16px;transform:scaleY(0.94);transform-origin:0 43.75%;color:#666;">编码<span style="margin-left:1.5px">:</span></div>
<div class="abs" style="left:1203.00px;top:452.00px;width:360.00px;height:36.00px;border:1px solid #dcdcdc;background:#fff"></div>
<div class="t" style="left:1215.62px;top:464.38px;font-size:15.6px;line-height:15.6px;color:#2e3238;"><span style="display:inline-block;transform:scaleX(.885);transform-origin:0 50%;margin-right:0px">YHPC</span></div>
<div class="t" style="left:1061.30px;top:513.00px;font-size:17px;line-height:16px;color:#ff3535">*</div><div class="t" style="left:1067.30px;top:512.70px;font-size:16px;line-height:16px;transform:scaleY(0.94);transform-origin:0 43.75%;color:#666;">名称<span style="margin-left:1.5px">:</span></div>
<div class="abs" style="left:1203.00px;top:502.00px;width:360.00px;height:36.00px;border:1px solid #dcdcdc;background:#fff"></div>
<div class="t" style="left:1215.81px;top:512.99px;font-size:15.8px;line-height:15.8px;transform:scaleY(0.94);transform-origin:0 43.75%;color:#2e3238;"><span style="display:inline-block;transform:scale(.88,1.1);transform-origin:0 62%;margin-right:-2.6px">PC</span>电脑</div>
<div class="t" style="left:1061.30px;top:564.40px;font-size:17px;line-height:16px;color:#ff3535">*</div><div class="t" style="left:1067.30px;top:564.10px;font-size:16px;line-height:16px;transform:scaleY(0.94);transform-origin:0 43.75%;color:#666;">数据库表<span style="margin-left:1.5px">:</span></div>
<div class="abs" style="left:1205.00px;top:552.00px;width:360.00px;height:36.00px;border:1px solid #dcdcdc;background:#fff"></div>
<div class="t" style="left:1216.62px;top:564.27px;font-size:15.6px;line-height:15.6px;transform:scaleY(0.94);transform-origin:0 43.75%;color:#aeaeae;"><span style="display:inline-block;transform:scale(.906,1.08);transform-origin:0 62%;margin-right:-16.9px">CMDB_T_PUBLIC(CMDB</span>公共表（拓展信息））</div>
<svg style="left:1544.60px;top:567.00px;" width="12" height="6" viewBox="0 0 12 6" fill="none"><path d="M0 0h11.2L5.6 5.4z" fill="#bdbdbd"/></svg>
<div class="t" style="left:1061.00px;top:615.50px;font-size:16px;line-height:16px;transform:scaleY(0.94);transform-origin:0 43.75%;color:#666;">拓扑图图标<span style="margin-left:1.5px">:</span></div>
<div class="abs" style="left:1205.00px;top:604.00px;width:360.00px;height:36.00px;border:1px solid #dcdcdc;background:#fff"></div>
<div class="t" style="left:1216.61px;top:615.79px;font-size:15.8px;line-height:15.8px;transform:scaleY(0.94);transform-origin:0 43.75%;color:#aeaeae;">大屏设备-其他</div>
<svg style="left:1544.60px;top:618.80px;" width="12" height="6" viewBox="0 0 12 6" fill="none"><path d="M0 0h11.2L5.6 5.4z" fill="#bdbdbd"/></svg>
<div class="t" style="left:1061.00px;top:666.90px;font-size:16px;line-height:16px;transform:scaleY(0.94);transform-origin:0 43.75%;color:#666;">授权组织<span style="margin-left:1.5px">:</span></div>
<div class="abs" style="left:1205.00px;top:656.00px;width:360.00px;height:36.00px;border:1px solid #dcdcdc;background:#fff;overflow:hidden"><div class="t" style="left:11.4px;top:9.4px;width:329.2px;overflow:hidden;font-size:15.75px;line-height:17px;color:#2e3238;transform:scaleY(.94);transform-origin:0 45%">总经办<span style="margin-right:-0.9px">,</span>财务部<span style="margin-right:-0.9px">,</span>信息中心<span style="margin-right:-0.9px">,</span>办公室<span style="margin-right:-0.9px">,</span>组织机构<span style="margin-right:-0.9px">,</span>织机构</div></div>
<div class="t" style="left:1061.00px;top:720.70px;font-size:16px;line-height:16px;transform:scaleY(0.94);transform-origin:0 43.75%;color:#666;">授权角色<span style="margin-left:1.5px">:</span></div>
<div class="abs" style="left:1203.00px;top:710.00px;width:360.00px;height:36.00px;border:1px solid #dcdcdc;border-radius:4px;background:#fff"></div>
<div class="t" style="left:1217.40px;top:718.10px;font-size:16px;line-height:16px;transform:scaleY(0.94);transform-origin:0 43.75%;color:#a0a0a0;">请选择</div>
<div class="t" style="left:1061.00px;top:791.10px;font-size:16px;line-height:16px;transform:scaleY(0.94);transform-origin:0 43.75%;color:#666;">描述<span style="margin-left:1.5px">:</span></div>
<div class="abs" style="left:1205.00px;top:764.00px;width:360.00px;height:67.00px;border:1px solid #d9e4ea;border-radius:4px;background:#fff"></div>
<svg style="left:1551.50px;top:817.50px;" width="11" height="11" viewBox="0 0 11 11" fill="none"><path d="M0.6 10.2L10.2 0.6M5.6 10.4l4.8-4.8" stroke="#555" stroke-width="0.9"/></svg>
<div class="abs" style="left:1415.00px;top:849.00px;width:70.80px;height:35.80px;background:#0e94ce;border-radius:5px"></div>
<svg style="left:1425.00px;top:860.50px;" width="15" height="12" viewBox="0 0 15 12" fill="none"><path d="M0.8 6.2l4.2 4.4L13.4 1" stroke="#fff" stroke-width="1.3" fill="none"/></svg>
<div class="t" style="left:1444.60px;top:859.90px;font-size:16px;line-height:16px;transform:scaleY(0.94);transform-origin:0 43.75%;color:#fff;font-weight:400;">提交</div>
<div class="abs" style="left:1490.00px;top:849.00px;width:71.00px;height:36.00px;background:#fff;border:1px solid #dcdcdc;border-radius:5px"></div>
<svg style="left:1501.60px;top:861.40px;" width="12" height="12" viewBox="0 0 12 12" fill="none"><path d="M0.8 0.6l10 11M10.8 0.6l-10 11" stroke="#333" stroke-width="1.2" fill="none"/></svg>
<div class="t" style="left:1520.40px;top:859.90px;font-size:16px;line-height:16px;transform:scaleY(0.94);transform-origin:0 43.75%;color:#333;">取消</div>
</div>
</div></div>
</body></html>
